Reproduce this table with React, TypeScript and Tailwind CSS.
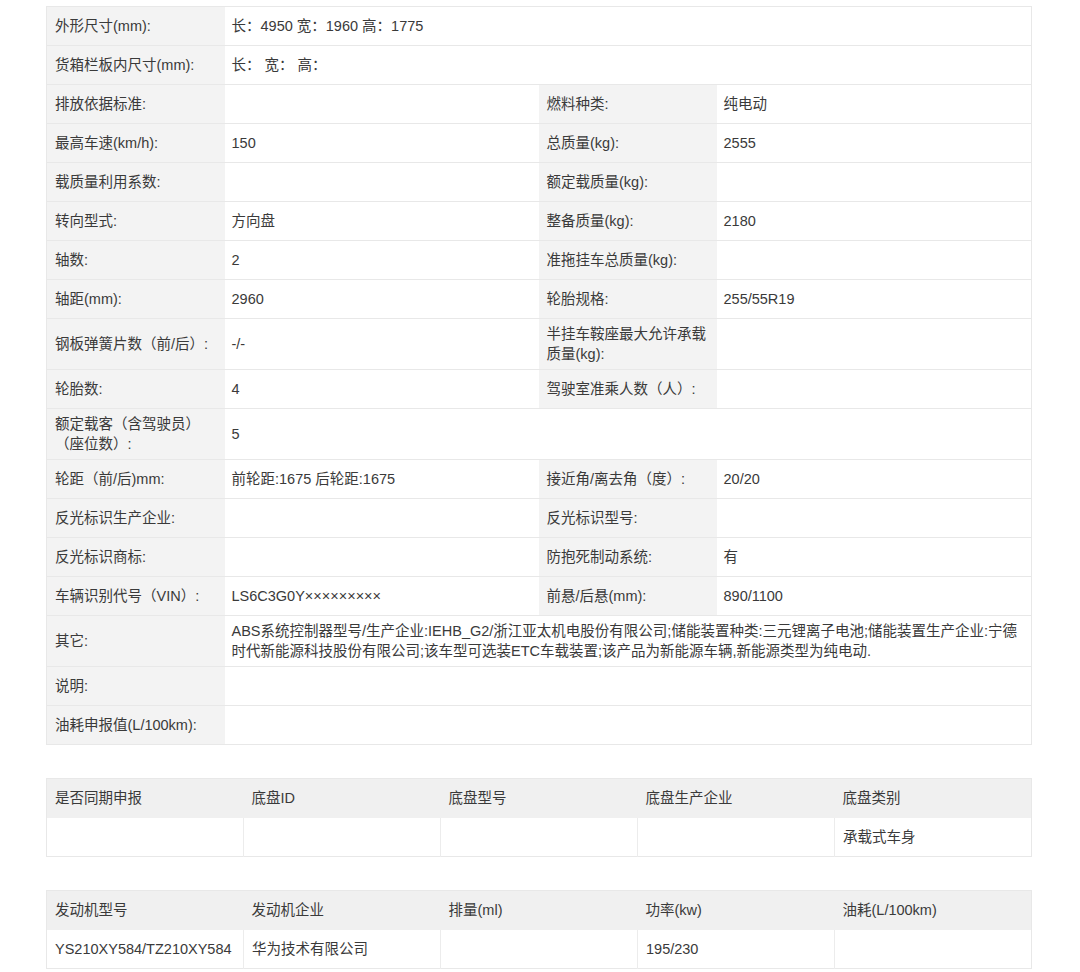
const font = { fontFamily: '"Liberation Sans", "Noto Sans CJK SC", sans-serif' };

type Row = { cells: [string, string, string?, string?]; tall?: boolean };

const rows: Row[] = [
  { cells: ["外形尺寸(mm):", "长：4950 宽：1960 高：1775"] },
  { cells: ["货箱栏板内尺寸(mm):", "长：  宽：  高："] },
  { cells: ["排放依据标准:", "", "燃料种类:", "纯电动"] },
  { cells: ["最高车速(km/h):", "150", "总质量(kg):", "2555"] },
  { cells: ["载质量利用系数:", "", "额定载质量(kg):", ""] },
  { cells: ["转向型式:", "方向盘", "整备质量(kg):", "2180"] },
  { cells: ["轴数:", "2", "准拖挂车总质量(kg):", ""] },
  { cells: ["轴距(mm):", "2960", "轮胎规格:", "255/55R19"] },
  { cells: ["钢板弹簧片数（前/后）:", "-/-", "半挂车鞍座最大允许承载质量(kg):", ""], tall: true },
  { cells: ["轮胎数:", "4", "驾驶室准乘人数（人）:", ""] },
  { cells: ["额定载客（含驾驶员）（座位数）:", "5"], tall: true },
  { cells: ["轮距（前/后)mm:", "前轮距:1675 后轮距:1675", "接近角/离去角（度）:", "20/20"] },
  { cells: ["反光标识生产企业:", "", "反光标识型号:", ""] },
  { cells: ["反光标识商标:", "", "防抱死制动系统:", "有"] },
  { cells: ["车辆识别代号（VIN）:", "LS6C3G0Y×××××××××", "前悬/后悬(mm):", "890/1100"] },
  {
    cells: [
      "其它:",
      "ABS系统控制器型号/生产企业:IEHB_G2/浙江亚太机电股份有限公司;储能装置种类:三元锂离子电池;储能装置生产企业:宁德时代新能源科技股份有限公司;该车型可选装ETC车载装置;该产品为新能源车辆,新能源类型为纯电动.",
    ],
    tall: true,
  },
  { cells: ["说明:", ""] },
  { cells: ["油耗申报值(L/100km):", ""] },
];

function SpecTable() {
  return (
    <table className="w-[986px] table-fixed border-collapse border border-[#e8e8e8] text-[14.5px] leading-[20px] text-[#3a3a3a]">
      <colgroup>
        <col className="w-[178px]" />
        <col className="w-[314px]" />
        <col className="w-[178px]" />
        <col />
      </colgroup>
      <tbody>
        {rows.map((r, i) => {
          const [l1, v1, l2, v2] = r.cells;
          const h = r.tall ? "h-[51px]" : "h-[39px]";
          const full = l2 === undefined;
          return (
            <tr key={i} className={`${h} border-b border-[#e8e8e8]`}>
              <td className="bg-[#f3f3f3] px-2 align-middle">{l1}</td>
              <td colSpan={full ? 3 : 1} className="bg-white px-[7px] align-middle">
                {v1}
              </td>
              {!full && (
                <>
                  <td className="bg-[#f3f3f3] px-2 align-middle">{l2}</td>
                  <td className="bg-white px-[7px] align-middle">{v2}</td>
                </>
              )}
            </tr>
          );
        })}
      </tbody>
    </table>
  );
}

function GridTable({ head, body }: { head: string[]; body: string[] }) {
  return (
    <table className="w-[986px] table-fixed border-collapse border border-[#e8e8e8] text-[14.5px] leading-[20px] text-[#3a3a3a]">
      <tbody>
        <tr className="h-[39px] bg-[#f0f0f0]">
          {head.map((t) => (
            <td key={t} className="px-2 align-middle">
              {t}
            </td>
          ))}
        </tr>
        <tr className="h-[39px] bg-white">
          {body.map((t, i) => (
            <td key={i} className="border-l border-[#ececec] px-2 align-middle first:border-l-0">
              {t}
            </td>
          ))}
        </tr>
      </tbody>
    </table>
  );
}

export default function App() {
  return (
    <div className="min-h-[972px] w-[1080px] bg-white pl-[46px] pt-[6px]" style={font}>
      <SpecTable />
      <div className="mt-[33px]">
        <GridTable
          head={["是否同期申报", "底盘ID", "底盘型号", "底盘生产企业", "底盘类别"]}
          body={["", "", "", "", "承载式车身"]}
        />
      </div>
      <div className="mt-[33px]">
        <GridTable
          head={["发动机型号", "发动机企业", "排量(ml)", "功率(kw)", "油耗(L/100km)"]}
          body={["YS210XY584/TZ210XY584", "华为技术有限公司", "", "195/230", ""]}
        />
      </div>
    </div>
  );
}
